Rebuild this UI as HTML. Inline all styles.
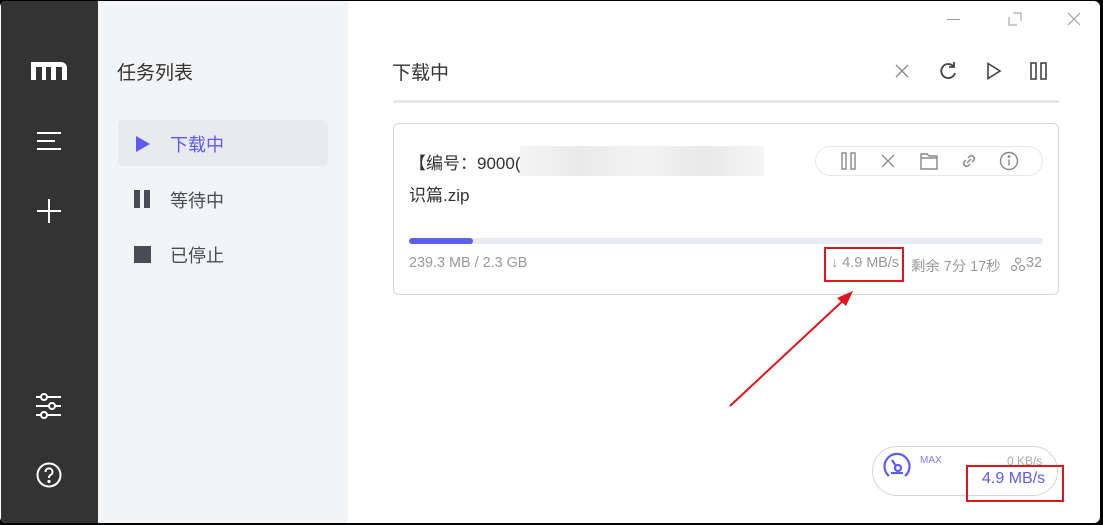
<!DOCTYPE html>
<html><head><meta charset="utf-8"><style>
*{margin:0;padding:0;box-sizing:border-box}
body{width:1103px;height:525px;background:#000;overflow:hidden;font-family:"Liberation Sans","Noto Sans CJK SC",sans-serif;position:relative}
.win{position:absolute;left:0;top:1px;width:1100px;height:522px;background:#fff;border-radius:6px;overflow:hidden}
.side{position:absolute;left:1px;top:0;width:97px;height:100%;background:#333}
.mid{position:absolute;left:98px;top:0;width:250px;height:100%;background:#f3f4f6}
.abs{position:absolute}
.t{position:absolute;white-space:nowrap}
</style></head><body>
<div class="win">
<div class="side">
<svg class="abs" style="left:30px;top:61px" width="36" height="18"><path d="M0 18V0h30a6 6 0 0 1 6 6v12h-5V5h-6v13h-5V5h-5v13h-4V5H5v13Z" fill="#fff"/></svg>
<svg class="abs" style="left:35px;top:130px" width="26" height="20"><path d="M1 2h24M1 10h18M1 18h24" stroke="#fff" stroke-width="2"/></svg>
<svg class="abs" style="left:36px;top:198px" width="24" height="24"><path d="M12 0v24M0 12h24" stroke="#fff" stroke-width="2"/></svg>
<svg class="abs" style="left:35px;top:392px" width="26" height="26" fill="none" stroke="#fff" stroke-width="2"><path d="M0 4h5M11 4h14M0 13h13M19 13h6M0 22h5M11 22h14"/><circle cx="8" cy="4" r="3"/><circle cx="16" cy="13" r="3"/><circle cx="8" cy="22" r="3"/></svg>
<svg class="abs" style="left:35px;top:461px" width="26" height="26" fill="none" stroke="#fff" stroke-width="2"><circle cx="13" cy="13" r="11.5"/><path d="M9.5 10a3.5 3.5 0 1 1 5 3c-1.2.6-1.5 1.3-1.5 3"/><circle cx="13" cy="19.5" r=".6" fill="#fff"/></svg>
</div>
<div class="mid">
<div class="t" style="left:19px;top:57px;font-size:19px;color:#333">任务列表</div>
<div class="abs" style="left:20px;top:119px;width:210px;height:46px;background:#e9eaee;border-radius:4px"></div>
<svg class="abs" style="left:37px;top:134px" width="16" height="18"><path d="M1 1L15 9L1 17Z" fill="#5b5bf5"/></svg>
<div class="t" style="left:72px;top:130px;font-size:18px;color:#5b5bf5">下载中</div>
<div class="abs" style="left:36px;top:189px;width:6px;height:18px;background:#4a4b55"></div>
<div class="abs" style="left:46px;top:189px;width:6px;height:18px;background:#4a4b55"></div>
<div class="t" style="left:72px;top:186px;font-size:18px;color:#4a4b55">等待中</div>
<div class="abs" style="left:36px;top:245px;width:17px;height:17px;background:#4a4b55"></div>
<div class="t" style="left:72px;top:241px;font-size:18px;color:#4a4b55">已停止</div>
</div>
<div class="abs" style="left:947px;top:18px;width:13px;height:1px;background:#999"></div>
<svg class="abs" style="left:1008px;top:11px" width="14" height="14" fill="none" stroke="#999"><path d="M1 5v8h8M5 1h8v8"/></svg>
<svg class="abs" style="left:1067px;top:11px" width="14" height="14" stroke="#999"><path d="M1 1l12 12M13 1L1 13"/></svg>
<div class="t" style="left:392px;top:57px;font-size:19px;color:#333">下载中</div>
<svg class="abs" style="left:895px;top:63px" width="14" height="14" stroke="#888" stroke-width="1.3"><path d="M1 1l12 12M13 1L1 13"/></svg>
<svg class="abs" style="left:938px;top:60px" width="20" height="20" fill="none" stroke="#444" stroke-width="1.8"><path d="M16 6A7 7 0 1 0 17 12"/><path d="M16 1v5h-5"/></svg>
<svg class="abs" style="left:986px;top:61px" width="16" height="18" fill="none" stroke="#444" stroke-width="1.6"><path d="M2 1.5L14 9L2 16.5Z"/></svg>
<svg class="abs" style="left:1030px;top:61px" width="18" height="18" fill="none" stroke="#444" stroke-width="1.6"><rect x="1" y="1" width="5" height="16"/><rect x="11" y="1" width="5" height="16"/></svg>
<div class="abs" style="left:393px;top:99px;width:666px;height:3px;background:#e8e8ea"></div>
<div class="abs" style="left:393px;top:122px;width:666px;height:172px;border:1px solid #d6d6d6;border-radius:6px"></div>
<div class="t" style="left:409px;top:148px;font-size:17px;color:#333">【编号：9000(</div>
<div class="abs" style="left:520px;top:145px;width:244px;height:30px;background:linear-gradient(90deg,#f4f4f4,#eaeaea,#f3f3f3,#e9e9e9,#f5f5f5)"></div>
<div class="t" style="left:409px;top:180px;font-size:17px;color:#333">识篇.zip</div>
<div class="abs" style="left:815px;top:145px;width:228px;height:30px;border:1px solid #e8e8e8;border-radius:15px"></div>
<svg class="abs" style="left:840px;top:151px" width="18" height="18" fill="none" stroke="#888" stroke-width="1.4"><rect x="2" y="1" width="4" height="16"/><rect x="11" y="1" width="4" height="16"/></svg>
<svg class="abs" style="left:881px;top:153px" width="14" height="14" stroke="#888" stroke-width="1.3"><path d="M1 1l12 12M13 1L1 13"/></svg>
<svg class="abs" style="left:920px;top:151px" width="18" height="18" fill="none" stroke="#888" stroke-width="1.4"><path d="M1 2h6l2 2h8v13H1zM1 6h16"/></svg>
<svg class="abs" style="left:960px;top:151px" width="18" height="18" fill="none" stroke="#888" stroke-width="1.5"><path d="M8 6l2-2a3 3 0 0 1 4 4l-2 2M10 12l-2 2a3 3 0 0 1-4-4l2-2M7 11l4-4"/></svg>
<svg class="abs" style="left:999px;top:150px" width="20" height="20" fill="none" stroke="#888" stroke-width="1.4"><circle cx="10" cy="10" r="8.5"/><path d="M10 8.5v6"/><circle cx="10" cy="5.5" r=".7" fill="#888"/></svg>
<div class="abs" style="left:409px;top:237px;width:634px;height:6px;background:#e9ecf2;border-radius:3px"></div>
<div class="abs" style="left:409px;top:237px;width:64px;height:6px;background:#5e5ee8;border-radius:3px"></div>
<div class="t" style="left:409px;top:254px;font-size:14.4px;color:#999">239.3 MB / 2.3 GB</div>
<div class="t" style="left:831px;top:254px;font-size:14.4px;color:#999">↓ 4.9 MB/s</div>
<div class="t" style="left:911px;top:254px;font-size:14.4px;color:#999">剩余 7分 17秒</div>
<svg class="abs" style="left:1011px;top:256px" width="14" height="14" fill="none" stroke="#999" stroke-width="1.2"><circle cx="7" cy="3.5" r="2.5"/><circle cx="3" cy="11" r="2.5"/><circle cx="11" cy="11" r="2.5"/><path d="M7 6v2M5 9l-1 0M9 9h1"/></svg>
<div class="t" style="left:1026px;top:254px;font-size:14.4px;color:#999">32</div>
<div class="abs" style="left:824px;top:246px;width:80px;height:35px;border:2px solid #e0141e"></div>
<svg class="abs" style="left:725px;top:285px" width="135" height="125"><path d="M5 120L123 10" stroke="#e0141e" stroke-width="2"/><path d="M128 5L112 12L121 20Z" fill="#e0141e"/></svg>
<div class="abs" style="left:872px;top:445px;width:186px;height:50px;border:1px solid #d6d6d6;border-radius:25px"></div>
<svg class="abs" style="left:882px;top:450px" width="30" height="30" fill="none" stroke="#5b5bf5" stroke-width="2.2"><path d="M7 25A12.5 12.5 0 1 1 23 25"/><path d="M10 9L14 15"/><circle cx="16" cy="17" r="3"/><path d="M9 22h12"/></svg>
<div class="t" style="left:920px;top:454px;font-size:10px;color:#7a7af0">MAX</div>
<div class="t" style="left:1007px;top:453px;font-size:12px;color:#aaa">0 KB/s</div>
<div class="t" style="left:982px;top:469px;font-size:16px;color:#5b5bf5">4.9 MB/s</div>
<div class="abs" style="left:966px;top:464px;width:98px;height:37px;border:2px solid #e0141e"></div>
</div>
</body></html>
